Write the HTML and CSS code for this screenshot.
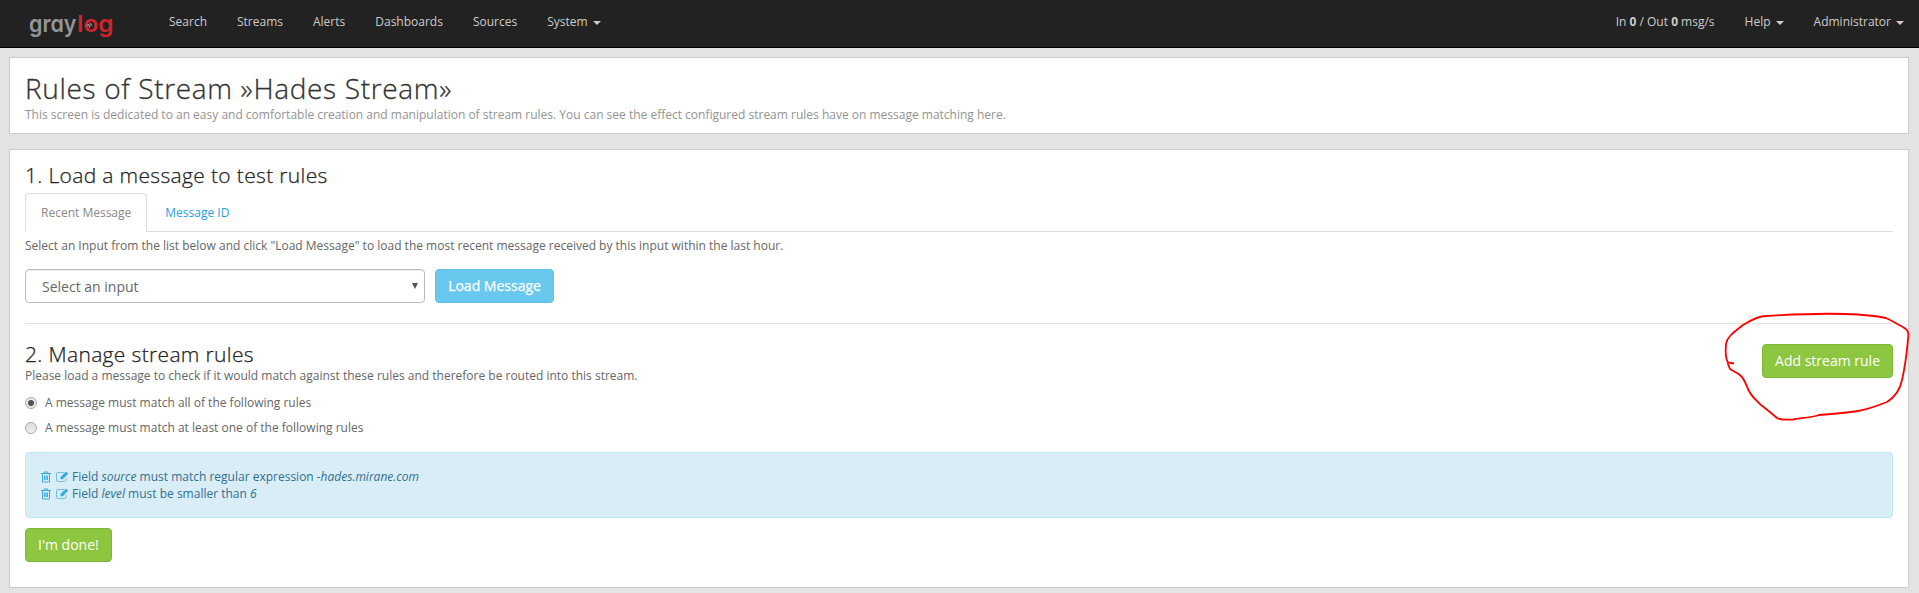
FILE: index.html
```html
<!DOCTYPE html>
<html lang="en">
<head>
<meta charset="utf-8">
<title>Rules of Stream</title>
<link rel="stylesheet" href="styles.css">
</head>
<body>
<nav class="navbar">
  <svg class="logo" width="84" height="42" viewBox="0 0 84 42" aria-label="graylog">
    <text class="logo-gray" x="-1" y="28" textLength="47.500" lengthAdjust="spacingAndGlyphs">gray</text>
    <text class="logo-red" x="47" y="28" textLength="36.500" lengthAdjust="spacingAndGlyphs">log</text>
    <path class="pulse" d="M56.500 21.500h1l1-1.500 1 3.500 1-4.500 1 2.500h1"/>
  </svg>
  <ul class="menu">
    <li>Search</li><li>Streams</li><li>Alerts</li><li>Dashboards</li><li>Sources</li><li>System<b class="caret"></b></li>
  </ul>
  <ul class="menu menu-right">
    <li class="throughput">In <strong>0</strong> / Out <strong>0</strong> msg/s</li><li class="help">Help<b class="caret"></b></li><li>Administrator<b class="caret"></b></li>
  </ul>
</nav>
<main class="page">
  <header class="panel heading">
    <h1>Rules of Stream »Hades Stream»</h1>
    <p class="lead">This screen is dedicated to an easy and comfortable creation and manipulation of stream rules. You can see the effect configured stream rules have on message matching here.</p>
  </header>
  <section class="panel content">
    <h2>1. Load a message to test rules</h2>
    <div class="tabs"><a class="tab active">Recent Message</a><a class="tab">Message ID</a></div>
    <p class="hint">Select an Input from the list below and click "Load Message" to load the most recent message received by this input within the last hour.</p>
    <div class="form-row">
      <div class="select"><span>Select an input</span><i class="arrow"></i></div>
      <button class="btn btn-info">Load Message</button>
    </div>
    <hr>
    <div class="rules-head">
      <div>
        <h2>2. Manage stream rules</h2>
        <p class="note">Please load a message to check if it would match against these rules and therefore be routed into this stream.</p>
      </div>
      <div class="add-wrap">
        <button class="btn btn-success">Add stream rule</button>
        <svg class="scribble" width="219" height="140" viewBox="0 0 219 140"><path d="M34 63.500L28 62.500C25 58 25.500 50 26 44C27 36 36 31 43 25C51 20 58 16 66 16C90 14.500 115 13 145 14C160 14.500 172 15 186 18C193 21 198 25 203 27C208 30 209 32 208 39C207 50 206 63 202 80C200 90 195 97 187 102C179 105 170 109 158 111C145 113 132 114 119 115C110 118 100 118 93 119.500C86 120 81 120 77 118C70 112 65 108 61 105C57 101 52 97 49 91C46 85 45 80 41 76C37 72 34 72 30 69L27.500 63"/></svg>
      </div>
    </div>
    <label class="radio"><i class="dot on"></i>A message must match all of the following rules</label>
    <label class="radio second"><i class="dot"></i>A message must match at least one of the following rules</label>
    <ul class="alert">
      <li><svg class="trash" width="10" height="12" viewBox="0 0 10 12"><path d="M0 2.500h10M3.200 2.500v-1.500h3.600v1.500M1.500 2.500v8.500h7v-8.500M3.500 4.500v4.500M5 4.500v4.500M6.500 4.500v4.500"/></svg><svg class="edit" width="13" height="12" viewBox="0 0 13 12"><path class="box" d="M8 1.500h-6q-1.500 0-1.500 1.500v6q0 1.500 1.500 1.500h6.500q1.500 0 1.500-1.500v-2"/><path class="pen" d="M4.500 6L10 .5l2.200 2.200-5.500 5.500h-2.200z"/></svg><span>Field <em>source</em> must match regular expression <em>-hades.mirane.com</em></span></li>
      <li><svg class="trash" width="10" height="12" viewBox="0 0 10 12"><path d="M0 2.500h10M3.200 2.500v-1.500h3.600v1.500M1.500 2.500v8.500h7v-8.500M3.500 4.500v4.500M5 4.500v4.500M6.500 4.500v4.500"/></svg><svg class="edit" width="13" height="12" viewBox="0 0 13 12"><path class="box" d="M8 1.500h-6q-1.500 0-1.500 1.500v6q0 1.500 1.500 1.500h6.500q1.500 0 1.500-1.500v-2"/><path class="pen" d="M4.500 6L10 .5l2.200 2.200-5.500 5.500h-2.200z"/></svg><span>Field <em>level</em> must be smaller than <em>6</em></span></li>
    </ul>
    <button class="btn btn-success done">I'm done!</button>
  </section>
</main>
</body>
</html>
```
FILE: styles.css
```css
* { box-sizing: border-box; }
body { margin: 0; height: 593px; overflow: hidden; background: #e3e3e3; font: 12px/17px "Open Sans", sans-serif; color: #666; }
h1, h2, p, ul { margin: 0; padding: 0; }
ul { list-style: none; }
.navbar { display: flex; height: 48px; background: #222; border-bottom: 1px solid #000; color: #ccc; }
.logo { flex: none; margin: 4px 0 0 30px; overflow: visible; }
.logo-gray, .logo-red { font: 600 23px Inter, sans-serif; font-feature-settings: "cv11"; fill: #939598; }
.logo-red { fill: #d2232a; }
.pulse { fill: none; stroke: #ccc; stroke-width: .6; }
.menu { display: flex; gap: 30px; margin: 13px 0 0 55px; white-space: nowrap; }
.menu-right { margin-left: auto; padding-right: 15px; }
.caret { display: inline-block; margin-left: 5px; vertical-align: middle; border: 4px solid transparent; border-top-color: #ccc; border-bottom: 0; }
.page { padding: 9px 10px 0 9px; }
.panel { background: #fff; border: 1px solid #ccc; padding: 0 15px; }
.heading { height: 77px; padding-top: 15px; }
h1 { font-weight: 300; font-size: 28px; line-height: 31px; letter-spacing: .66px; color: #333; -webkit-text-stroke: .3px #333; }
.lead { color: #939393; margin-top: 2px; }
.content { height: 439px; margin-top: 15px; padding-top: 15px; }
h2 { font-weight: 300; font-size: 21px; line-height: 21px; margin-bottom: 2px; letter-spacing: .34px; color: #222; -webkit-text-stroke: .25px #222; }
.tabs { display: flex; margin-top: 7px; height: 39px; border-bottom: 1px solid #ddd; }
.tab { height: 39px; padding: 10px 15px; border: 1px solid transparent; color: #1f9fe0; margin-right: 2px; }
.tab.active { color: #888; background: #fff; border-color: #ddd; border-bottom-color: #fff; border-radius: 4px 4px 0 0; }
.hint { margin-top: 5px; }
.form-row { display: flex; gap: 10px; margin-top: 15px; }
.select { display: flex; justify-content: space-between; align-items: center; width: 400px; height: 34px; padding: 1px 6px 0 16px; border: 1px solid #bbb; border-radius: 4px; font-size: 14px; box-shadow: inset 0 1px 1px #00000013; }
.arrow { border: 3px solid transparent; border-top: 6px solid #555; border-bottom: 0; margin-top: -2px; }
.btn { height: 34px; padding: 0 12px; border: 1px solid; border-radius: 4px; font: 14px/20px "Open Sans", sans-serif; color: #fff; white-space: nowrap; }
.btn-info { background: #68c8ed; border-color: #60c0e6; width: 119px; -webkit-text-stroke: .25px #fff; }
.btn-success { background: #8dc63f; border-color: #7fb636; }
hr { height: 1px; margin: 20px 0 0; border: 0; background: #e1e1e1; }
.rules-head { display: flex; justify-content: space-between; height: 61px; padding-top: 20px; }
.add-wrap { position: relative; }
.scribble { position: absolute; left: -62px; top: -44px; fill: none; stroke: #f00; stroke-width: 1.8; }
.radio { display: flex; align-items: center; gap: 8px; height: 17px; margin-top: 9px; }
.radio.second { margin-top: 8px; }
.dot { width: 12px; height: 12px; border: 1px solid #aaa; border-radius: 50%; background: linear-gradient(#ddd, #eee); }
.dot.on { background: radial-gradient(circle, #555 0 2.7px, #e8e8e8 3.4px); }
.alert { margin-top: 16px; height: 66px; padding: 15px; border: 1px solid #bce8f1; border-radius: 4px; background: #d9edf7; color: #31708f; }
.alert li { display: flex; align-items: center; height: 17px; }
.trash { fill: none; stroke: #3ba9e0; margin-right: 5px; }
.edit { margin-right: 3px; fill: #3ba9e0; }
.edit .box { fill: none; stroke: #70bfe8; }
.done { display: block; margin-top: 10px; }
```
